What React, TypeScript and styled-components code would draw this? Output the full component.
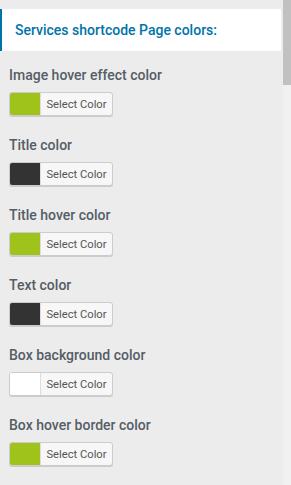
import React from "react";
import styled, { createGlobalStyle } from "styled-components";

const Global = createGlobalStyle`
  html, body { margin: 0; padding: 0; background: #ececec; }
  body { font-family: Roboto, "Liberation Sans", Arial, sans-serif; overflow: hidden; }
`;

const Frame = styled.div`
  display: flex;
  width: 291px;
  height: 485px;
  background: #ececec;
  overflow: hidden;
`;

const Panel = styled.div`
  flex: 1;
  display: flex;
  flex-direction: column;
  padding: 9px 2px 0 0;
`;

const Header = styled.div`
  background: #fff;
  border-left: 2px solid #0073aa;
  height: 42px;
  display: flex;
  align-items: center;
  padding-left: 13px;
  color: #0073aa;
  font-size: 14px;
  font-weight: 500;
`;

const Fields = styled.div`
  display: flex;
  flex-direction: column;
  padding: 15px 0 0 9px;
  gap: 20px;
`;

const Field = styled.div`
  display: flex;
  flex-direction: column;
  gap: 8px;
`;

const Label = styled.div`
  color: #555d66;
  font-size: 14px;
  font-weight: 500;
  line-height: 18px;
`;

const ColorButton = styled.button`
  display: flex;
  align-items: stretch;
  width: 104px;
  height: 24px;
  padding: 0;
  border: 1px solid #ccc;
  border-radius: 3px;
  background: #f7f7f7;
  box-shadow: 0 1px 0 #ccc;
  overflow: hidden;
  cursor: pointer;
  font-family: Roboto, "Liberation Sans", Arial, sans-serif;
`;

const Swatch = styled.span<{ $color: string }>`
  width: 30px;
  background: ${(p) => p.$color};
  border-right: 1px solid #ddd;
`;

const ButtonText = styled.span`
  flex: 1;
  display: flex;
  align-items: center;
  justify-content: center;
  font-size: 11.2px;
  color: #555;
`;

const Track = styled.div`
  width: 8px;
  background: #f1f1f1;
  display: flex;
  flex-direction: column;
`;

const Thumb = styled.div`
  height: 85px;
  background: #c1c1c1;
`;

const fields = [
  { label: "Image hover effect color", color: "#a0c31b" },
  { label: "Title color", color: "#333333" },
  { label: "Title hover color", color: "#a0c31b" },
  { label: "Text color", color: "#333333" },
  { label: "Box background color", color: "#ffffff" },
  { label: "Box hover border color", color: "#a0c31b" },
];

export default function App() {
  return (
    <>
      <Global />
      <Frame>
        <Panel>
          <Header>Services shortcode Page colors:</Header>
          <Fields>
            {fields.map((f) => (
              <Field key={f.label}>
                <Label>{f.label}</Label>
                <ColorButton type="button">
                  <Swatch $color={f.color} />
                  <ButtonText>Select Color</ButtonText>
                </ColorButton>
              </Field>
            ))}
          </Fields>
        </Panel>
        <Track>
          <Thumb />
        </Track>
      </Frame>
    </>
  );
}
